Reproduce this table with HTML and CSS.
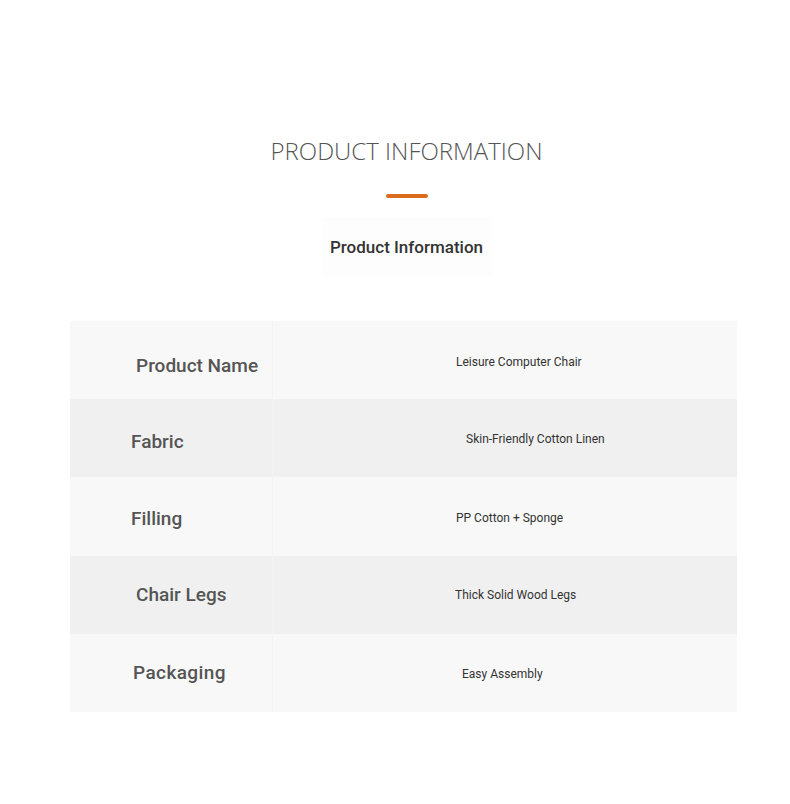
FILE: index.html
```html
<!DOCTYPE html>
<html>
<head>
<meta charset="utf-8">
<link rel="stylesheet" href="styles.css">
</head>
<body>
<main class="page">
  <header class="head">
    <h1 class="title">PRODUCT INFORMATION</h1>
    <div class="bar"></div>
    <div class="sub"><span>Product Information</span></div>
  </header>
  <section class="table">
    <div class="row light">
      <div class="label l1"><span>Product Name</span></div>
      <div class="value v1"><span>Leisure Computer Chair</span></div>
    </div>
    <div class="row dark">
      <div class="label l2"><span>Fabric</span></div>
      <div class="value v2"><span>Skin-Friendly Cotton Linen</span></div>
    </div>
    <div class="row light">
      <div class="label l3"><span>Filling</span></div>
      <div class="value v3"><span>PP Cotton + Sponge</span></div>
    </div>
    <div class="row dark">
      <div class="label l4"><span>Chair Legs</span></div>
      <div class="value v4"><span>Thick Solid Wood Legs</span></div>
    </div>
    <div class="row light">
      <div class="label l5"><span>Packaging</span></div>
      <div class="value v5"><span>Easy Assembly</span></div>
    </div>
  </section>
</main>
</body>
</html>
```
FILE: styles.css
```css
*, *::before, *::after {
  box-sizing: border-box;
}
html, body {
  margin: 0;
  padding: 0;
  background: #ffffff;
}
body {
  font-family: Roboto, "Liberation Sans", sans-serif;
  color: #333;
}
.page {
  width: 667px;
  margin-left: 70px;
  padding-top: 135px;
}
.head {
  display: flex;
  flex-direction: column;
  align-items: center;
  padding-left: 6px;
}
.title {
  margin: 0;
  font-family: "Open Sans", Roboto, sans-serif;
  font-weight: 300;
  font-size: 24px;
  line-height: 32px;
  color: #555;
}
.bar {
  width: 42px;
  height: 4px;
  border-radius: 2px;
  background: #dc6b1c;
  margin-top: 27px;
}
.sub {
  margin-top: 19px;
  width: 170px;
  height: 60px;
  display: flex;
  align-items: center;
  justify-content: center;
  background: #fdfdfd;
  font-size: 17px;
  font-weight: 500;
  color: #333;
}
.table {
  margin-top: 44px;
  display: flex;
  flex-direction: column;
}
.row {
  display: flex;
  height: 78px;
}
.row.light { background: #f8f8f8; }
.row.dark { background: #f0f0f0; }
.row:nth-child(3) { height: 79px; }
.label {
  flex: 0 0 203px;
  width: 203px;
  border-right: 1px solid #f3f3f3;
  display: flex;
  align-items: center;
  font-size: 19px;
  font-weight: 500;
  color: #555;
}
.value {
  flex: 1;
  display: flex;
  align-items: center;
  font-size: 12px;
  color: #333;
}
.l1 { padding: 10px 0 0 66px; }
.l2 { padding: 6px 0 0 61px; }
.l3 { padding: 4px 0 0 61px; }
.l4 { padding: 0 0 2px 66px; }
.l5 { padding: 0 0 2px 63px; letter-spacing: 0.4px; }
.v1 { padding: 4px 0 0 183px; }
.v2 { padding: 2px 0 0 193px; }
.v3 { padding: 2px 0 0 183px; }
.v4 { padding: 0 0 0 182px; }
.v5 { padding: 2px 0 0 189px; }
```
